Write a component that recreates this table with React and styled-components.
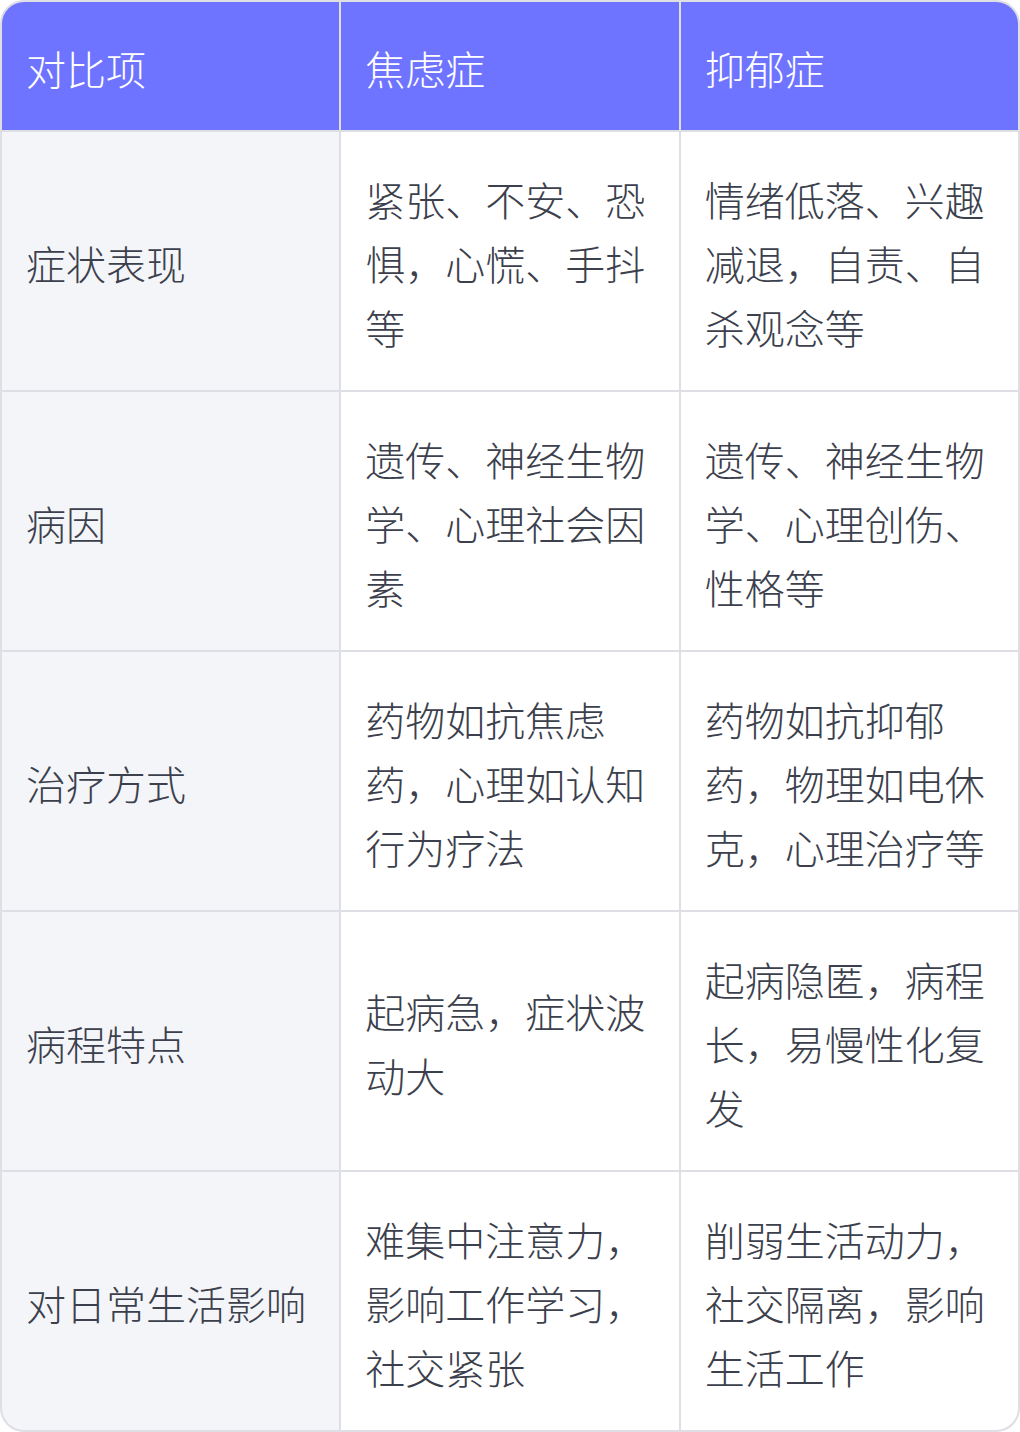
import React from 'react';
import styled, { createGlobalStyle } from 'styled-components';

const GlobalStyle = createGlobalStyle`
    html, body {
        margin: 0;
        padding: 0;
        background: #ffffff;
    }
`;

const Table = styled.div`
    width: 1020px;
    box-sizing: border-box;
    border: 2px solid #dedfe5;
    border-radius: 24px;
    overflow: hidden;
    display: grid;
    grid-template-columns: 1fr 1fr 1fr;
    gap: 2px;
    background: #dedfe5;
    font-family: "Noto Sans CJK SC", "Noto Sans", sans-serif;
    font-weight: 300;
`;

const HeadCell = styled.div`
    background: #6e74ff;
    color: #ffffff;
    font-size: 40px;
    line-height: 64px;
    padding: 34px 24px 30px;
`;

const Cell = styled.div`
    background: ${p => (p.$label ? '#f4f5f9' : '#ffffff')};
    color: #3b404c;
    font-size: 40px;
    line-height: 64px;
    height: 258px;
    box-sizing: border-box;
    padding: 3px 24px 0;
    display: flex;
    align-items: center;
`;

const headers = ['对比项', '焦虑症', '抑郁症'];

const rows = [
    ['症状表现', '紧张、不安、恐惧，心慌、手抖等', '情绪低落、兴趣减退，自责、自杀观念等'],
    ['病因', '遗传、神经生物学、心理社会因素', '遗传、神经生物学、心理创伤、性格等'],
    ['治疗方式', '药物如抗焦虑药，心理如认知行为疗法', '药物如抗抑郁药，物理如电休克，心理治疗等'],
    ['病程特点', '起病急，症状波动大', '起病隐匿，病程长，易慢性化复发'],
    ['对日常生活影响', '难集中注意力，影响工作学习，社交紧张', '削弱生活动力，社交隔离，影响生活工作'],
];

const App = () => (
    <>
        <GlobalStyle />
        <Table>
            {headers.map(h => (
                <HeadCell key={h}>{h}</HeadCell>
            ))}
            {rows.map(r => (
                <React.Fragment key={r[0]}>
                    <Cell $label>{r[0]}</Cell>
                    <Cell>{r[1]}</Cell>
                    <Cell>{r[2]}</Cell>
                </React.Fragment>
            ))}
        </Table>
    </>
);

export default App;
